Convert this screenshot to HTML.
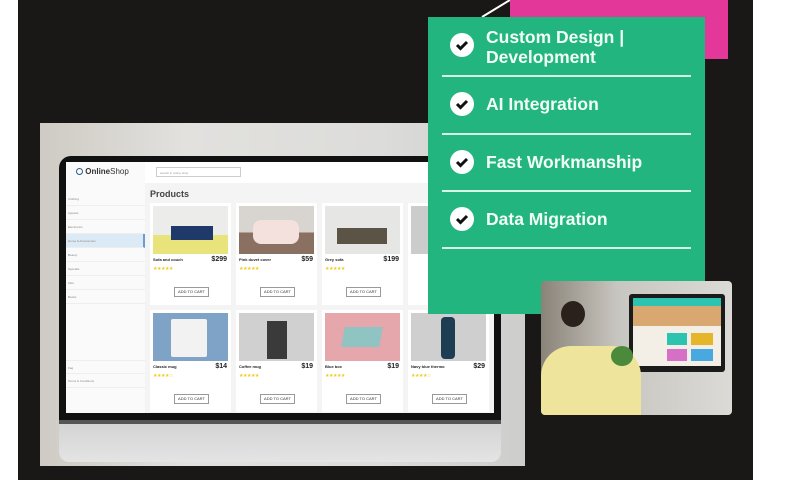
<!DOCTYPE html>
<html><head><meta charset="utf-8"><style>
*{margin:0;padding:0;box-sizing:border-box}
body{width:800px;height:480px;background:#fff;position:relative;overflow:hidden;font-family:"Liberation Sans",sans-serif}
.abs{position:absolute}
.blk{left:18px;top:0;width:735px;height:480px;background:#1a1817}
.mock{left:40px;top:123px;width:485px;height:343px;background:linear-gradient(90deg,#cfcbc4 0%,#e2e1de 30%,#dcdcda 70%,#cdcdcb 100%)}
.bezel{left:59px;top:156px;width:442px;height:266px;background:#111;border-radius:12px 12px 0 0}
.chin{left:59px;top:420px;width:442px;height:42px;background:linear-gradient(#d4d4d4,#e4e4e4);border-radius:0 0 10px 10px;border-top:4px solid #555}
.scr{left:66px;top:162px;width:428px;height:251px;background:#f4f4f4;overflow:hidden}
.side{left:0;top:0;width:79px;height:251px;background:#fafafa}
.side div{font-size:3px;color:#888;height:14px;border-bottom:1px solid #eee;padding:5px 2px}
.card{position:absolute;width:81px;height:102px;background:#fff}
.card .im{position:absolute;left:3px;top:3px;width:75px;height:48px}
.card .t{position:absolute;left:3px;top:54px;font-size:4px;font-weight:bold;color:#222}
.card .p{position:absolute;right:4px;top:53px;font-size:7px;font-weight:bold;color:#222}
.card .s{position:absolute;left:3px;top:63px;font-size:5px;color:#f0cc20;letter-spacing:-.5px}
.card .b{position:absolute;left:24px;top:84px;width:35px;height:10px;border:1px solid #999;font-size:4px;text-align:center;line-height:8px;color:#333}
.grn{left:428px;top:17px;width:277px;height:297px;background:#22b57f}
.pink{left:510px;top:0;width:218px;height:59px;background:#e4379a}
.item{position:absolute;left:20px;width:228px;color:#f2fff8;font-size:17.5px;font-weight:bold;font-family:"Liberation Sans",sans-serif;letter-spacing:0}
.chk{position:absolute;left:22px;width:24px;height:24px;border-radius:50%;background:#fff}
.line{position:absolute;left:14px;width:249px;height:2px;background:#d8f3e8}
.photo{left:541px;top:281px;width:191px;height:134px;border-radius:4px;overflow:hidden;background:linear-gradient(90deg,#8a8378,#c8c6c0 40%,#dcdad6)}
</style></head><body>
<div class="abs blk"></div>
<svg class="abs" style="left:470px;top:0" width="50" height="20"><line x1="12" y1="17" x2="40" y2="0" stroke="#fff" stroke-width="2"/></svg>
<div class="abs mock"></div>
<div class="abs bezel"></div>
<div class="abs chin"></div>
<div class="abs scr">
 <div class="abs side">
  <div style="height:30px;border:none;font-size:8px;color:#333;padding:5px 10px"><span style="display:inline-block;width:7px;height:7px;border:1.5px solid #2a5d8a;border-radius:50%;vertical-align:-1px"></span> <b>Online</b>Shop</div>
  <div>Clothing</div><div>Apparel</div><div>Electronics</div><div style="background:#dceaf5;border-right:2px solid #6a9ccc">Home &amp; Accessories</div><div>Beauty</div><div>Specials</div><div>Kids</div><div>Books</div>
  <div style="margin-top:56px;border-top:1px solid #eee">Faq</div><div>Terms &amp; Conditions</div>
 </div>
 <div class="abs" style="left:79px;top:0;width:349px;height:21px;background:#fff"></div>
 <div class="abs" style="left:90px;top:5px;width:85px;height:10px;border:1px solid #ccc;font-size:3px;color:#999;padding:3px">search in online shop</div>
 <div class="abs" style="left:84px;top:27px;font-size:9px;font-weight:bold;color:#444">Products</div>
 <div class="card" style="left:84px;top:41px"><div class="im" style="background:linear-gradient(#ececea 60%,#e8e37a 60%)"><div style="position:absolute;left:18px;top:20px;width:42px;height:14px;background:#1f3a6a"></div></div><div class="t">Sofa and couch</div><div class="p">$299</div><div class="s">★★★★★</div><div class="b">ADD TO CART</div></div>
 <div class="card" style="left:170px;top:41px"><div class="im" style="background:linear-gradient(#d8d4d0 55%,#8a7060 55%)"><div style="position:absolute;left:14px;top:14px;width:46px;height:24px;background:#f4e0dd;border-radius:8px"></div></div><div class="t">Pink duvet cover</div><div class="p">$59</div><div class="s">★★★★★</div><div class="b">ADD TO CART</div></div>
 <div class="card" style="left:256px;top:41px"><div class="im" style="background:#e6e6e4"><div style="position:absolute;left:12px;top:22px;width:50px;height:16px;background:#5b5346"></div></div><div class="t">Grey sofa</div><div class="p">$199</div><div class="s">★★★★★</div><div class="b">ADD TO CART</div></div>
 <div class="card" style="left:342px;top:41px"><div class="im" style="background:#ccc"></div></div>
 <div class="card" style="left:84px;top:148px"><div class="im" style="background:#7ea3c6"><div style="position:absolute;left:18px;top:6px;width:36px;height:38px;background:#f2f2f2;border-radius:2px"></div></div><div class="t">Classic mug</div><div class="p">$14</div><div class="s">★★★★☆</div><div class="b">ADD TO CART</div></div>
 <div class="card" style="left:170px;top:148px"><div class="im" style="background:#d0d0d0"><div style="position:absolute;left:28px;top:8px;width:20px;height:38px;background:#3a3a3a"></div></div><div class="t">Coffee mug</div><div class="p">$19</div><div class="s">★★★★★</div><div class="b">ADD TO CART</div></div>
 <div class="card" style="left:256px;top:148px"><div class="im" style="background:#e5a7ab"><div style="position:absolute;left:18px;top:14px;width:38px;height:20px;background:#8fc4c2;transform:skewX(-10deg)"></div></div><div class="t">Blue box</div><div class="p">$19</div><div class="s">★★★★★</div><div class="b">ADD TO CART</div></div>
 <div class="card" style="left:342px;top:148px"><div class="im" style="background:#cfcfcf"><div style="position:absolute;left:30px;top:4px;width:14px;height:42px;background:#1f3d52;border-radius:4px"></div></div><div class="t">Navy blue thermo</div><div class="p">$29</div><div class="s">★★★★☆</div><div class="b">ADD TO CART</div></div>
</div>
<div class="abs pink"></div>
<div class="abs grn">
 <div class="chk" style="top:16px"></div><svg class="abs" style="left:22px;top:16px" width="24" height="24"><path d="M7 12l3.5 3.5L17 9" stroke="#111" stroke-width="3" fill="none"/></svg>
 <div class="item" style="left:58px;top:10px;line-height:20px">Custom Design |<br>Development</div>
 <div class="line" style="top:58px"></div>
 <div class="chk" style="top:75px"></div><svg class="abs" style="left:22px;top:75px" width="24" height="24"><path d="M7 12l3.5 3.5L17 9" stroke="#111" stroke-width="3" fill="none"/></svg>
 <div class="item" style="left:58px;top:77px">AI Integration</div>
 <div class="line" style="top:116px"></div>
 <div class="chk" style="top:133px"></div><svg class="abs" style="left:22px;top:133px" width="24" height="24"><path d="M7 12l3.5 3.5L17 9" stroke="#111" stroke-width="3" fill="none"/></svg>
 <div class="item" style="left:58px;top:135px">Fast Workmanship</div>
 <div class="line" style="top:173px"></div>
 <div class="chk" style="top:190px"></div><svg class="abs" style="left:22px;top:190px" width="24" height="24"><path d="M7 12l3.5 3.5L17 9" stroke="#111" stroke-width="3" fill="none"/></svg>
 <div class="item" style="left:58px;top:192px">Data Migration</div>
 <div class="line" style="top:230px"></div>
</div>
<div class="abs photo">
 <div class="abs" style="left:88px;top:13px;width:96px;height:78px;background:#1b1b1b;border-radius:3px"></div>
 <div class="abs" style="left:92px;top:17px;width:88px;height:68px;background:#f4efe6"></div>
 <div class="abs" style="left:92px;top:17px;width:88px;height:8px;background:#2cc3b0"></div>
 <div class="abs" style="left:92px;top:25px;width:88px;height:20px;background:#d9a770"></div>
 <div class="abs" style="left:126px;top:52px;width:20px;height:12px;background:#2cc3b0"></div>
 <div class="abs" style="left:150px;top:52px;width:22px;height:12px;background:#e5b62a"></div>
 <div class="abs" style="left:126px;top:68px;width:20px;height:12px;background:#d66fc6"></div>
 <div class="abs" style="left:150px;top:68px;width:22px;height:12px;background:#47a9e0"></div>
 <div class="abs" style="left:20px;top:20px;width:24px;height:26px;background:#2b211c;border-radius:50%"></div>
 <div class="abs" style="left:0;top:65px;width:100px;height:70px;background:#eee49c;border-radius:30px 30px 0 0"></div>
 <div class="abs" style="left:70px;top:65px;width:22px;height:20px;background:#4a8a3a;border-radius:50%"></div>
</div>
</body></html>
